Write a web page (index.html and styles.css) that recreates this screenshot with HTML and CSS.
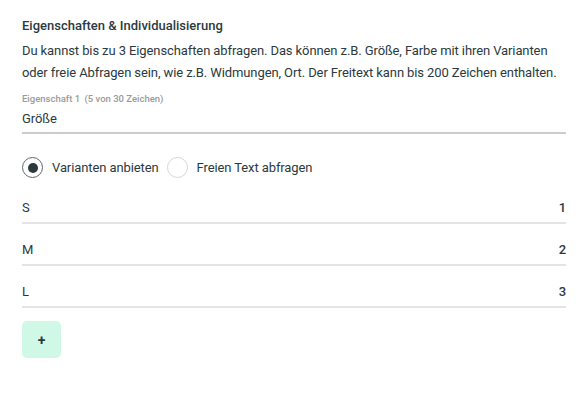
FILE: index.html
```html
<!DOCTYPE html>
<html lang="de">
<head>
    <meta charset="UTF-8">
    <title>Eigenschaften</title>
    <link rel="stylesheet" href="styles.css">
</head>
<body>
    <div class="panel">
        <h3 class="title">Eigenschaften &amp; Individualisierung</h3>
        <p class="intro">Du kannst bis zu 3 Eigenschaften abfragen. Das können z.B. Größe, Farbe mit ihren Varianten oder freie Abfragen sein, wie z.B. Widmungen, Ort. Der Freitext kann bis 200 Zeichen enthalten.</p>

        <div class="field">
            <label class="field-label">Eigenschaft 1 <span class="count">(5 von 30 Zeichen)</span></label>
            <div class="field-value">Größe</div>
        </div>

        <div class="choices">
            <label class="choice"><span class="radio checked"></span>Varianten anbieten</label>
            <label class="choice"><span class="radio"></span>Freien Text abfragen</label>
        </div>

        <div class="variants">
            <div class="variant"><span>S</span><span class="num">1</span></div>
            <div class="variant"><span>M</span><span class="num">2</span></div>
            <div class="variant"><span>L</span><span class="num">3</span></div>
        </div>

        <button class="add">+</button>
    </div>
</body>
</html>
```

FILE: styles.css
```css
body {
    margin: 0;
    font-family: Roboto, "Liberation Sans", sans-serif;
    color: #2b3a3e;
    background: #ffffff;
    letter-spacing: -0.1px;
}

.panel {
    width: 544px;
    padding: 17px 0 0 22px;
}

.title {
    margin: 0;
    font-size: 13px;
    font-weight: 500;
    line-height: 18px;
    letter-spacing: 0;
}

.intro {
    margin: 5px 0 0;
    font-size: 13px;
    line-height: 22px;
}

/* Text field */
.field {
    margin-top: 9px;
    border-bottom: 2px solid #cbcbcb;
    padding-bottom: 4px;
}

.field-label {
    display: block;
    font-size: 9.5px;
    font-weight: 500;
    color: #9a9a9a;
    line-height: 12px;
    letter-spacing: 0;
}

.count {
    margin-left: 2px;
}

.field-value {
    margin-top: 5px;
    font-size: 13px;
    line-height: 18px;
}

/* Radios */
.choices {
    display: flex;
    gap: 8px;
    margin-top: 23px;
}

.choice {
    display: flex;
    align-items: center;
    gap: 9px;
    font-size: 13px;
    line-height: 20px;
}

.radio {
    width: 19px;
    height: 19px;
    border: 1px solid #d6d6d6;
    border-radius: 50%;
    display: flex;
    align-items: center;
    justify-content: center;
}

.radio.checked {
    border-color: #5d6a6c;
}

.radio.checked::after {
    content: "";
    width: 10px;
    height: 10px;
    border-radius: 50%;
    background: #2b3a3e;
}

/* Variant rows */
.variants {
    margin-top: 4px;
}

.variant {
    display: flex;
    justify-content: space-between;
    font-size: 13px;
    line-height: 18px;
    padding: 17px 0 5px;
    border-bottom: 2px solid #e4e4e4;
}

.num {
    font-weight: 500;
}

/* Add button */
.add {
    margin-top: 13px;
    width: 39px;
    height: 37px;
    border: none;
    border-radius: 5px;
    background: #cff8e6;
    color: #2b3a3e;
    font-family: inherit;
    font-size: 14px;
    font-weight: 700;
    cursor: pointer;
}
```
